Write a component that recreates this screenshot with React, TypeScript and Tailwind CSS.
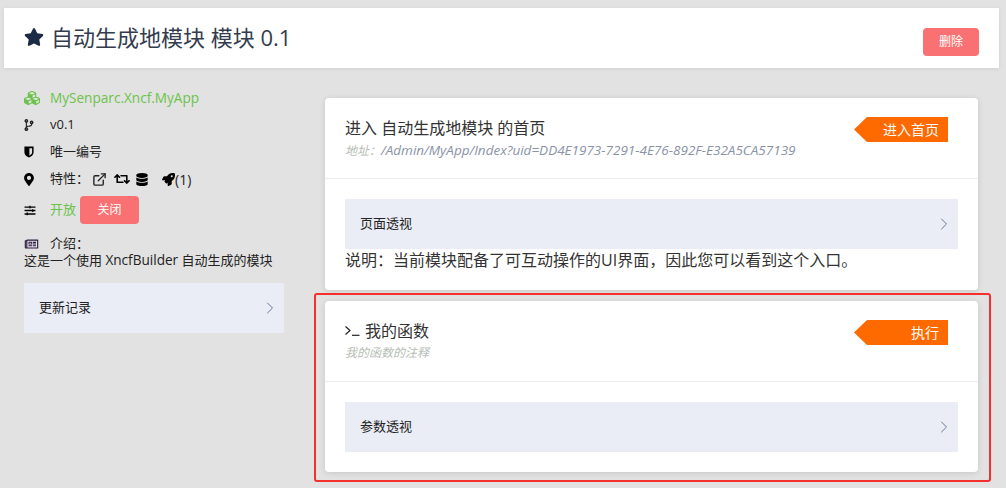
import { ReactNode } from 'react';
import {
  FaCubes,
  FaCodeBranch,
  FaMapMarkerAlt,
  FaDatabase,
  FaRetweet,
  FaRocket,
  FaSlidersH,
  FaRegNewspaper,
  FaStar,
} from 'react-icons/fa';
import { FiExternalLink } from 'react-icons/fi';
import { ChevronRight } from 'lucide-react';

function InfoRow({ icon, children, className }: { icon: ReactNode; children: ReactNode; className?: string }) {
  return (
    <div className={`flex items-center ${className ?? ''}`}>
      <span className="w-[26px] shrink-0 flex items-center">{icon}</span>
      {children}
    </div>
  );
}

function DetailBar({ label, width }: { label: string; width: string }) {
  return (
    <div className={`${width} h-[50px] bg-[#eaedf5] flex items-center justify-between pl-[15px] pr-[4px] text-[13px] text-[#222]`}>
      <span>{label}</span>
      <ChevronRight className="w-5 h-5 text-[#4f5f82]" strokeWidth={1} />
    </div>
  );
}

function ArrowTag({ label }: { label: string }) {
  return (
    <div className="w-[94px] h-[25px] bg-[#ff6a00] text-white text-[14px] flex items-center justify-end pr-[9px] [clip-path:polygon(13px_0,100%_0,100%_100%,13px_100%,0_50%)]">
      {label}
    </div>
  );
}

function ShieldIcon() {
  return (
    <svg viewBox="0 0 12 14" className="w-[10px] h-[12px] text-black" fill="currentColor">
      <path
        fillRule="evenodd"
        d="M0.5 0.5h11v7c0 3-3.2 5-5.5 6.2C3.7 12.500 0.5 10.500 0.500 7.500z M6.500 2.500h3.200v4.800c0 2-1.800 3.300-3.200 4.100z"
      />
    </svg>
  );
}

function PromptIcon() {
  return (
    <svg viewBox="0 0 15 10" className="w-[15px] h-[10px] mr-[5px] text-[#222]" fill="none" stroke="currentColor" strokeWidth="1.2">
      <path d="M0.500 0.500L5 4.500L0.500 8.500" />
      <path d="M7 9.300H14.500" />
    </svg>
  );
}

export default function App() {
  return (
    <div className="w-[1006px] h-[488px] overflow-hidden bg-[#e2e2e2] pt-2 pl-1 text-[#222] font-['Open_Sans','Noto_Sans_CJK_SC',sans-serif]">
      {/* Header */}
      <div className="w-[995px] h-[60px] bg-white shadow-[0_1px_4px_rgba(0,0,0,0.08)] flex items-center justify-between pl-5 pr-5">
        <h1 className="flex items-center text-[22px] font-normal text-[#333c4e] -mt-[2px]">
          <FaStar className="w-[20px] h-[20px] mr-[7px] text-[#1c2b45]" />
          自动生成地模块 模块 0.1
        </h1>
        <button className="w-[56px] h-[28px] mt-[7px] rounded bg-[#f97173] text-white text-[12px]">删除</button>
      </div>

      <div className="flex mt-[18px] pl-5">
        {/* Left column */}
        <div className="w-[260px] shrink-0 text-[13px] text-[#222] pt-[1px]">
          <InfoRow className="h-[22px] text-[#6cc24a]" icon={<FaCubes className="w-4 h-4 text-[#6cc24a]" />}>
            <span className="text-[13.6px]">MySenparc.Xncf.MyApp</span>
          </InfoRow>
          <InfoRow className="h-[22px] mt-[5px]" icon={<FaCodeBranch className="w-[10px] h-[12px]" />}>
            v0.1
          </InfoRow>
          <InfoRow className="h-[22px] mt-[5px]" icon={<ShieldIcon />}>
            唯一编号
          </InfoRow>
          <InfoRow className="h-[22px] mt-[5px]" icon={<FaMapMarkerAlt className="w-[10px] h-[13px] text-black" />}>
            <span className="mr-[3px]">特性：</span>
            <FiExternalLink className="w-[15px] h-[15px] mr-[7px]" strokeWidth={2.2} />
            <FaRetweet className="w-[16px] h-[16px] mr-[6px] text-black" />
            <FaDatabase className="w-[12px] h-[13px] mr-[14px] text-black" />
            <FaRocket className="w-[13px] h-[13px] text-black" />
            <span className="text-[14px]">(1)</span>
          </InfoRow>
          <InfoRow className="h-[28px] mt-[6px]" icon={<FaSlidersH className="w-[12px] h-[11px] text-black" />}>
            <span className="text-[#6cc24a]">开放</span>
            <button className="w-[59px] h-[28px] ml-[4px] rounded bg-[#f97173] text-white text-[12px]">关闭</button>
          </InfoRow>
          <InfoRow className="h-[18px] mt-[11px]" icon={<FaRegNewspaper className="w-[15px] h-[12px] text-[#2a1a40]" />}>
            介绍：
          </InfoRow>
          <p className="leading-[16px] -mt-[1px]">
            这是一个使用 <span className="text-[13.6px]">XncfBuilder</span> 自动生成的模块
          </p>
          <div className="mt-[15px]">
            <DetailBar label="更新记录" width="w-[260px]" />
          </div>
        </div>

        {/* Right column */}
        <div className="ml-[41px] w-[653px] pt-[12px]">
          <div className="h-[192px] bg-white rounded shadow-[0_1px_6px_rgba(0,0,0,0.12)]">
            <div className="h-[81px] border-b border-[#ebedf4] pl-5 pr-[30px] pt-[19px] flex justify-between">
              <div>
                <div className="text-[16px] leading-[22px] text-[#333]">进入 自动生成地模块 的首页</div>
                <div className="text-[12px] leading-[22px] italic">
                  <span className="text-[#b5bdb5]">地址：</span>
                  <span className="text-[13.5px] text-[#8a93a5]">/Admin/MyApp/Index?uid=DD4E1973-7291-4E76-892F-E32A5CA57139</span>
                </div>
              </div>
              <ArrowTag label="进入首页" />
            </div>
            <div className="px-5 pt-5">
              <DetailBar label="页面透视" width="w-full" />
              <p className="text-[16px] leading-[22px] text-[#333]">说明：当前模块配备了可互动操作的UI界面，因此您可以看到这个入口。</p>
            </div>
          </div>

          {/* Card with the red annotation frame over it */}
          <div className="relative mt-[11px] h-[171px] bg-white rounded shadow-[0_1px_6px_rgba(0,0,0,0.12)]">
            <div className="absolute -left-[11px] -top-[8px] w-[677px] h-[189px] rounded-[3px] border-2 border-[#f5302c]" />
            <div className="h-[81px] border-b border-[#ebedf4] pl-5 pr-[30px] pt-[19px] flex justify-between">
              <div>
                <div className="flex items-center text-[16px] leading-[22px] text-[#333]">
                  <PromptIcon />
                  我的函数
                </div>
                <div className="text-[12px] leading-[22px] italic text-[#b5bdb5]">我的函数的注释</div>
              </div>
              <ArrowTag label="执行" />
            </div>
            <div className="px-5 pt-5">
              <DetailBar label="参数透视" width="w-full" />
            </div>
          </div>
        </div>
      </div>
    </div>
  );
}
